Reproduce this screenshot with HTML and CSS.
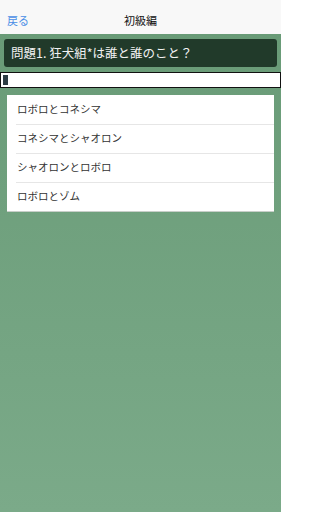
FILE: index.html
```html
<!DOCTYPE html>
<html lang="ja">
<head>
<meta charset="utf-8">
<link rel="stylesheet" href="styles.css">
</head>
<body>
<div class="app">
  <header class="nav">
    <span class="back">戻る</span>
    <span class="title">初級編</span>
  </header>
  <main class="content">
    <div class="question">問題1. 狂犬組*は誰と誰のこと？</div>
    <div class="progress"><div class="progress-fill"></div></div>
    <ul class="answers">
      <li class="answer">ロボロとコネシマ</li>
      <li class="answer">コネシマとシャオロン</li>
      <li class="answer">シャオロンとロボロ</li>
      <li class="answer">ロボロとゾム</li>
    </ul>
  </main>
</div>
</body>
</html>
```
FILE: styles.css
```css
* { box-sizing: border-box; }
html, body { margin: 0; padding: 0; }
body {
  width: 281px;
  height: 512px;
  font-family: "Noto Sans CJK JP", "Noto Sans", sans-serif;
  overflow: hidden;
}
.app {
  display: flex;
  flex-direction: column;
  height: 512px;
}
.nav {
  height: 34px;
  background: #f8f8f8;
  display: flex;
  align-items: center;
  justify-content: center;
  position: relative;
  padding-top: 6px;
  flex: none;
}
.back {
  position: absolute;
  left: 7px;
  top: 12px;
  font-size: 11px;
  line-height: 16px;
  color: #4a8ee6;
}
.title {
  font-size: 11px;
  line-height: 16px;
  color: #111;
}
.content {
  flex: 1;
  background: linear-gradient(#699b77, #7baa89);
  padding: 5px 0 0;
  display: flex;
  flex-direction: column;
}
.question {
  margin: 0 4px;
  height: 28px;
  background: #213a2a;
  border-radius: 3px;
  color: #f2f2f2;
  font-size: 12.5px;
  line-height: 28px;
  padding-left: 7px;
}
.progress {
  margin-top: 5px;
  height: 16px;
  background: #fff;
  border: 1px solid #111;
  padding: 2px;
}
.progress-fill {
  width: 5px;
  height: 10px;
  background: #2c3c44;
}
.answers {
  list-style: none;
  margin: 7px 7px 0;
  padding: 0;
  background: #fff;
  box-shadow: 0 1px 0 #c8cfc9;
}
.answer {
  height: 29px;
  line-height: 28px;
  font-size: 10.5px;
  color: #333;
  padding-left: 10px;
  position: relative;
}
.answer + .answer::before {
  content: "";
  position: absolute;
  left: 9px;
  right: 0;
  top: 0;
  height: 1px;
  background: #e6e6e6;
}
```
